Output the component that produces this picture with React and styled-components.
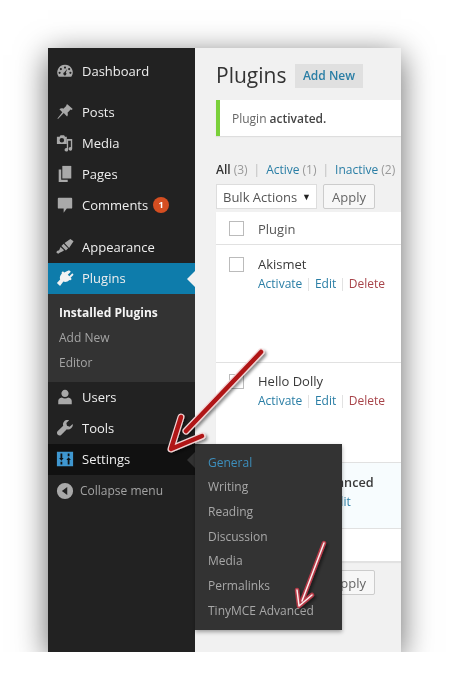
import styled, { createGlobalStyle } from 'styled-components';

const Global = createGlobalStyle`
  html, body { margin: 0; padding: 0; background: #fff; }
  body { font-family: "Open Sans", "Liberation Sans", sans-serif; }
`;

const Frame = styled.div`
  position: relative;
  display: flex;
  width: 353px;
  height: 604px;
  margin: 48px 0 0 48px;
  box-shadow: 0 7px 30px rgba(0, 0, 0, 0.6);
  filter: blur(0.55px);
`;

const Sidebar = styled.nav`
  position: relative;
  z-index: 2;
  flex: 0 0 147px;
  padding-top: 8px;
  box-sizing: border-box;
  background: #222;
`;

const Row = styled.div`
  position: relative;
  display: flex;
  align-items: center;
  height: 31px;
  padding-bottom: 2px;
  box-sizing: border-box;
  margin-top: ${({ $gap }) => $gap || 0}px;
  background: ${({ $active, $open }) => ($active ? '#0e7cab' : $open ? '#111' : 'transparent')};
  color: #eee;
  font-size: 13px;
`;

const IconSlot = styled.span`
  display: flex;
  justify-content: center;
  flex: 0 0 34px;
  color: ${({ $color }) => $color || '#a9a9a9'};
  svg { display: block; width: 18px; height: 18px; fill: currentColor; }
`;

const Label = styled.span`
  white-space: nowrap;
`;

const Badge = styled.span`
  display: inline-flex;
  align-items: center;
  justify-content: center;
  width: 16px;
  height: 16px;
  margin-left: 5px;
  border-radius: 50%;
  background: #d54e21;
  color: #fff;
  font-size: 9px;
  font-weight: 700;
`;

const Notch = styled.span`
  position: absolute;
  right: 0;
  top: 50%;
  width: 0;
  height: 0;
  margin-top: -8px;
  border: 8px solid transparent;
  border-right-color: ${({ $color }) => $color};
  border-left-width: 0;
`;

const SubMenu = styled.div`
  height: 88px;
  padding: 7px 0 0 11px;
  box-sizing: border-box;
  background: #333;
`;

const SubItem = styled.div`
  height: 24.8px;
  line-height: 24.8px;
  font-size: 12px;
  font-weight: ${({ $current }) => ($current ? 700 : 400)};
  color: ${({ $current }) => ($current ? '#f4f4f4' : '#a4a4a4')};
`;

const Collapse = styled(Row)`
  margin-top: 1px;
  color: #a4a4a4;
  font-size: 12px;
  ${Label} { margin-left: -2px; }
`;

const Flyout = styled.div`
  position: absolute;
  left: 100%;
  top: 0;
  z-index: 3;
  width: 147px;
  height: 186px;
  padding: 6.5px 0 0 13px;
  box-sizing: border-box;
  background: #333;
  box-shadow: 0 2px 4px rgba(0, 0, 0, 0.35);
`;

const FlyItem = styled.div`
  height: 24.7px;
  line-height: 24.7px;
  font-size: 12px;
  white-space: nowrap;
  color: ${({ $current }) => ($current ? '#3d8fbd' : '#a8a8a8')};
`;

const Content = styled.main`
  flex: 1;
  min-width: 0;
  padding: 16px 0 0 21px;
  overflow: hidden;
  background: #f1f1f1;
  color: #444;
  font-size: 13px;
`;

const TitleRow = styled.div`
  display: flex;
  align-items: center;
  gap: 9px;
  height: 24px;
`;

const Title = styled.h1`
  margin: -2px 0 0;
  font-size: 21px;
  font-weight: 400;
  color: #333;
`;

const AddNew = styled.span`
  padding: 0 7.5px;
  height: 24px;
  line-height: 24px;
  background: #e0e0e0;
  color: #2a7ea5;
  font-size: 12px;
  font-weight: 600;
  white-space: nowrap;
`;

const Notice = styled.div`
  display: flex;
  align-items: center;
  height: 36px;
  margin-top: 12px;
  padding-left: 12px;
  background: #fff;
  border-left: 4px solid #7ad03a;
  box-sizing: border-box;
  box-shadow: 0 1px 1px rgba(0, 0, 0, 0.08);
  font-size: 12px;
  color: #666;
  b { font-weight: 600; color: #444; margin-left: 3px; }
`;

const Filters = styled.div`
  display: flex;
  align-items: center;
  height: 18px;
  margin-top: 24px;
  font-size: 12px;
  white-space: nowrap;
  color: #999;
  b { font-weight: 600; color: #333; margin-right: 3px; }
  a { color: #2a7ea5; margin-right: 3px; }
  i { font-style: normal; color: #bbb; margin: 0 6px; }
`;

const Actions = styled.div`
  display: flex;
  gap: 6px;
  height: 25px;
  margin-top: ${({ $top }) => $top || 6}px;
`;

const Select = styled.div`
  display: flex;
  align-items: center;
  justify-content: space-between;
  width: 101px;
  padding: 0 5px 0 6px;
  box-sizing: border-box;
  background: #fff;
  border: 1px solid #ddd;
  font-size: 13px;
  color: #555;
  white-space: nowrap;
  span { font-size: 9px; color: #222; }
`;

const Button = styled.div`
  display: flex;
  align-items: center;
  justify-content: center;
  width: 52px;
  margin-left: ${({ $left }) => $left || 0}px;
  box-sizing: border-box;
  background: #f7f7f7;
  border: 1px solid #ccc;
  border-radius: 2px;
  font-size: 13px;
  color: #666;
`;

const Table = styled.div`
  margin-top: 3px;
  background: #fff;
  box-shadow: 0 1px 1px rgba(0, 0, 0, 0.06);
`;

const TableRow = styled.div`
  display: flex;
  height: ${({ $h }) => $h}px;
  padding-top: ${({ $pad }) => $pad || 0}px;
  box-sizing: border-box;
  background: ${({ $active }) => ($active ? '#f7fcfe' : '#fff')};
  border-bottom: 1px solid #e1e1e1;
`;

const Check = styled.span`
  flex: 0 0 15px;
  width: 15px;
  height: 15px;
  margin: ${({ $top }) => $top || 0}px 14px 0 13px;
  box-sizing: border-box;
  background: #fff;
  border: 1px solid #bbb;
`;

const PluginCell = styled.div`
  white-space: nowrap;
`;

const PluginName = styled.div`
  height: 20px;
  line-height: 20px;
  font-size: ${({ $strong }) => ($strong ? 12.7 : 13)}px;
  font-weight: ${({ $strong }) => ($strong ? 600 : 400)};
  color: #3a3a3a;
`;

const RowLinks = styled.div`
  height: 20px;
  line-height: 20px;
  font-size: 12px;
  color: #2a7ea5;
  i { font-style: normal; color: #ddd; margin: 0 3px; }
  em { font-style: normal; color: #a8444a; }
`;

const HeaderLabel = styled.span`
  line-height: 17px;
  font-size: 13px;
  color: #555;
`;

const Overlay = styled.svg`
  position: absolute;
  left: 0;
  top: 0;
  z-index: 4;
  pointer-events: none;
`;

const Dashboard = () => (
  <svg viewBox="0 0 20 20">
    <path fillRule="evenodd" d="M10 3a8.5 8.5 0 0 0-7 13.4h14A8.5 8.5 0 0 0 10 3zM10 5a1.2 1.2 0 1 1 0 2.4A1.2 1.2 0 0 1 10 5zM5.4 6.7a1.2 1.2 0 1 1 0 2.4 1.2 1.2 0 0 1 0-2.4zM14.6 6.7a1.2 1.2 0 1 1 0 2.4 1.2 1.2 0 0 1 0-2.4zM4 10.8a1.2 1.2 0 1 1 0 2.4 1.2 1.2 0 0 1 0-2.4zM16 10.8a1.2 1.2 0 1 1 0 2.4 1.2 1.2 0 0 1 0-2.4zM12.6 7.6l-1.7 4.2a1.7 1.7 0 1 1-1.5-.3z" />
  </svg>
);
const Posts = () => (
  <svg viewBox="0 0 20 20">
    <path d="M12.6 1.5l6 5.2-1.4 1.2-1-.6-3.4 3.4c.6 1.5.4 3-.5 4.2L8.6 11l-6.4 6.8-.6-.5L7 10.200 3.800 6.900c1.200-1 2.800-1.200 4.300-.6l3.500-3.200-.4-1z" />
  </svg>
);
const Media = () => (
  <svg viewBox="0 0 20 20">
    <path fillRule="evenodd" d="M1 3h3l1-1.500h4L10 3h2v8H1zM6.500 4.500a2.500 2.500 0 1 0 0 5 2.500 2.500 0 0 0 0-5z" />
    <path d="M13 5.500h6v11a2 2 0 1 1-1.500-1.900V7.500h-3v10a2 2 0 1 1-1.500-1.900z" transform="translate(-1 0)" />
  </svg>
);
const Pages = () => (
  <svg viewBox="0 0 20 20">
    <path d="M7 1h10v14H7z" />
    <path d="M3 5h2.800v11.500H13V19H3z" />
  </svg>
);
const Comment = () => (
  <svg viewBox="0 0 20 20">
    <path d="M3 2h14a1 1 0 0 1 1 1v10a1 1 0 0 1-1 1h-5l-3.500 4.500V14H3a1 1 0 0 1-1-1V3a1 1 0 0 1 1-1z" />
  </svg>
);
const Brush = () => (
  <svg viewBox="0 0 20 20">
    <path d="M19.500 3.500L16 1l-6.500 4.500L14.500 11zM8.500 6.500L6 9l5 5 2.500-2.500zM5 10l-1.500 3.500L1 14.500l-.5 2 2 1 1.500-1 3-1.500 2-1.500z" />
  </svg>
);
const Plug = () => (
  <svg viewBox="0 0 20 20">
    <path d="M14.500 1.500l2 1.500-3.400 3.500 1.700 1.500 3.400-3.400 1.300 1.900-3.300 3.300 1.300 1.200-1.500 1.500-1-.3c-2 2-4.700 2.700-6.800 1.800L4.500 19 1 15.500l3.600-3.700C3.800 9.700 4.500 7 6.500 5l-.3-1 1.500-1.500 1.400 1.400z" />
  </svg>
);
const User = () => (
  <svg viewBox="0 0 20 20">
    <path d="M10 2a4 4 0 0 1 4 4.200c0 2-1.500 3.800-4 3.800S6 8.200 6 6.200A4 4 0 0 1 10 2z" />
    <path d="M6.500 10.500c1 .8 2.200 1.100 3.500 1.100s2.500-.3 3.500-1.100c2.500.6 4 2 4 4v3.500h-15v-3.500c0-2 1.500-3.400 4-4z" />
  </svg>
);
const Wrench = () => (
  <svg viewBox="0 0 20 20">
    <path d="M18.500 5.500l-3.300 3-3-1-.7-3L14.600 1.500c-2-.8-4.300-.3-5.600 1.200-1.200 1.300-1.500 3.100-1 4.700L1.700 13.700c-.9.900-.9 2.700.2 3.800 1.200 1.200 2.900 1.100 3.800.2L12 11.400c1.700.5 3.500.1 4.800-1.200 1.500-1.300 2.300-3 1.700-4.700z" />
  </svg>
);
const Sliders = () => (
  <svg viewBox="0 0 20 20">
    <path fillRule="evenodd" d="M1 2h18v16H1zM5 4v5H3.500L6 12l2.500-3H7V4zM5 13v3h2v-3zM13 4v3h2V4zM14 8l-2.500 3H13v5h2v-5h1.500z" />
  </svg>
);
const CollapseIcon = () => (
  <svg viewBox="0 0 20 20">
    <path fillRule="evenodd" d="M10 1a9 9 0 1 1 0 18 9 9 0 0 1 0-18zM12.500 5.500L6.500 10l6 4.500z" />
  </svg>
);

const settingsLinks = ['General', 'Writing', 'Reading', 'Discussion', 'Media', 'Permalinks', 'TinyMCE Advanced'];

export default function App() {
  return (
    <>
      <Global />
      <Frame>
        <Sidebar>
          <Row><IconSlot><Dashboard /></IconSlot><Label>Dashboard</Label></Row>
          <Row $gap={10}><IconSlot><Posts /></IconSlot><Label>Posts</Label></Row>
          <Row><IconSlot><Media /></IconSlot><Label>Media</Label></Row>
          <Row><IconSlot><Pages /></IconSlot><Label>Pages</Label></Row>
          <Row><IconSlot><Comment /></IconSlot><Label>Comments</Label><Badge>1</Badge></Row>
          <Row $gap={11}><IconSlot><Brush /></IconSlot><Label>Appearance</Label></Row>
          <Row $active>
            <IconSlot $color="#f2f2f2"><Plug /></IconSlot><Label>Plugins</Label>
            <Notch $color="#f1f1f1" />
          </Row>
          <SubMenu>
            <SubItem $current>Installed Plugins</SubItem>
            <SubItem>Add New</SubItem>
            <SubItem>Editor</SubItem>
          </SubMenu>
          <Row><IconSlot><User /></IconSlot><Label>Users</Label></Row>
          <Row><IconSlot><Wrench /></IconSlot><Label>Tools</Label></Row>
          <Row $open>
            <IconSlot $color="#3f97d0"><Sliders /></IconSlot><Label>Settings</Label>
            <Notch $color="#333" />
            <Flyout>
              {settingsLinks.map((link, i) => (
                <FlyItem key={link} $current={i === 0}>{link}</FlyItem>
              ))}
            </Flyout>
          </Row>
          <Collapse><IconSlot><CollapseIcon /></IconSlot><Label>Collapse menu</Label></Collapse>
        </Sidebar>
        <Content>
          <TitleRow>
            <Title>Plugins</Title>
            <AddNew>Add New</AddNew>
          </TitleRow>
          <Notice>Plugin <b>activated.</b></Notice>
          <Filters>
            <b>All</b> (3)<i>|</i><a>Active</a> (1)<i>|</i><a>Inactive</a> (2)
          </Filters>
          <Actions>
            <Select>Bulk Actions <span>▼</span></Select>
            <Button>Apply</Button>
          </Actions>
          <Table>
            <TableRow $h={33} $pad={9}><Check /><HeaderLabel>Plugin</HeaderLabel></TableRow>
            <TableRow $h={118} $pad={9}>
              <Check $top={3} />
              <PluginCell>
                <PluginName>Akismet</PluginName>
                <RowLinks>Activate<i>|</i>Edit<i>|</i><em>Delete</em></RowLinks>
              </PluginCell>
            </TableRow>
            <TableRow $h={100} $pad={8}>
              <Check $top={3} />
              <PluginCell>
                <PluginName>Hello Dolly</PluginName>
                <RowLinks>Activate<i>|</i>Edit<i>|</i><em>Delete</em></RowLinks>
              </PluginCell>
            </TableRow>
            <TableRow $h={66} $pad={9} $active>
              <Check $top={3} />
              <PluginCell>
                <PluginName $strong>TinyMCE Advanced</PluginName>
                <RowLinks>Deactivate<i>|</i>Edit</RowLinks>
              </PluginCell>
            </TableRow>
            <TableRow $h={33} />
          </Table>
          <Actions $top={8}>
            <Button $left={107}>Apply</Button>
          </Actions>
        </Content>
        <Overlay width="353" height="604" viewBox="48 48 353 604">
          <defs>
            <filter id="arrow-shadow" x="-20%" y="-20%" width="140%" height="140%">
              <feDropShadow dx="2" dy="2" stdDeviation="1.500" floodColor="#000" floodOpacity="0.45" />
            </filter>
          </defs>
          <g fill="none" strokeLinecap="round" strokeLinejoin="round" filter="url(#arrow-shadow)">
            <g stroke="#f2d6d6" strokeWidth="7">
              <path d="M261 352L186 431" />
              <path d="M181 417L171 449L202 436" />
            </g>
            <g stroke="#b01218" strokeWidth="4.500">
              <path d="M261 352L186 431" />
              <path d="M181 417L171 449L202 436" />
            </g>
          </g>
          <g fill="none" strokeLinecap="round" strokeLinejoin="round" filter="url(#arrow-shadow)">
            <g stroke="#b83a48" strokeWidth="4.500">
              <path d="M324 543L302 601" />
              <path d="M297 590L299 606L312 595" />
            </g>
            <g stroke="#fbeeee" strokeWidth="1.500">
              <path d="M324 543L302 601" />
              <path d="M297 590L299 606L312 595" />
            </g>
          </g>
        </Overlay>
      </Frame>
    </>
  );
}
